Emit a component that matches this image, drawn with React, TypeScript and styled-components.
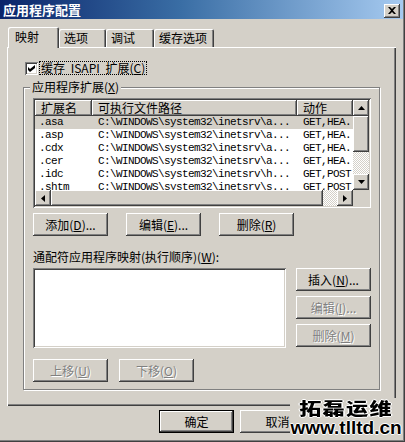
import styled, { createGlobalStyle } from 'styled-components'

const face = '#d4d0c8'

const raised = `
  box-shadow: inset -1px -1px #404040, inset 1px 1px #fff, inset -2px -2px #808080, inset 2px 2px ${face};
`
const sunken = `
  box-shadow: inset 1px 1px #808080, inset -1px -1px #fff, inset 2px 2px #404040, inset -2px -2px ${face};
`

const GlobalStyle = createGlobalStyle`
  html, body {
    margin: 0;
    padding: 0;
    background: ${face};
  }
  body {
    font-family: "Noto Sans CJK SC", "Liberation Sans", sans-serif;
    font-size: 12px;
    color: #000;
  }
  * {
    box-sizing: border-box;
  }
`

const Window = styled.div`
  position: relative;
  width: 405px;
  height: 442px;
  padding-right: 2px;
  background: ${face};
  box-shadow: inset -1px -1px #404040, inset -2px -2px #808080;
  overflow: hidden;
`

const TitleBar = styled.div`
  height: 19px;
  display: flex;
  align-items: center;
  justify-content: space-between;
  padding: 0 3px 0 3px;
  background: linear-gradient(90deg, #0a246a 0%, #3a6ea5 45%, #a6caf0 100%);
`

const Title = styled.span`
  color: #fff;
  font-weight: bold;
  font-size: 13px;
  line-height: 19px;
`

const CloseButton = styled.div`
  width: 16px;
  height: 14px;
  margin-top: 2px;
  display: flex;
  align-items: center;
  justify-content: center;
  background: ${face};
  ${raised}
`

const Body = styled.div`
  padding: 8px 0 0 7px;
`

const TabStrip = styled.div`
  position: relative;
  z-index: 1;
  display: flex;
  align-items: flex-end;
  height: 20px;
  margin-left: 1px;
`

const Tab = styled.div<{ $w: number; $active?: boolean }>`
  width: ${(p) => p.$w}px;
  height: ${(p) => (p.$active ? 21 : 18)}px;
  margin-bottom: ${(p) => (p.$active ? -1 : 0)}px;
  padding-left: ${(p) => (p.$active ? 7 : 5)}px;
  line-height: ${(p) => (p.$active ? 20 : 18)}px;
  background: ${face};
  border-radius: 2px 2px 0 0;
  box-shadow: inset 1px 1px #fff, inset -1px 0 #404040, inset -2px 0 #808080;
`

const Panel = styled.div`
  width: 389px;
  height: 359px;
  padding-top: 14px;
  box-shadow: inset 1px 1px #fff, inset -1px -1px #404040, inset -2px -2px #808080;
`

const CheckRow = styled.div`
  display: flex;
  align-items: center;
  gap: 1px;
  height: 14px;
  margin-left: 18px;
`

const CheckBox = styled.div`
  width: 13px;
  height: 13px;
  display: flex;
  align-items: center;
  justify-content: center;
  background: #fff;
  ${sunken}
`

const FocusLabel = styled.span`
  padding: 0 1px;
  border: 1px dotted #000;
  line-height: 12px;
  word-spacing: 3px;
`

const Group = styled.fieldset`
  width: 357px;
  margin: 5px 0 0 16px;
  padding: 4px 8px 7px 9px;
  border: 1px solid #808080;
  box-shadow: inset 1px 1px #fff, 1px 1px #fff;
  min-inline-size: auto;
`

const Legend = styled.legend`
  margin-left: -3px;
  padding: 0 2px;
  line-height: 14px;
  background: ${face};
`

const ListView = styled.div`
  width: 338px;
  height: 110px;
  padding: 2px;
  display: grid;
  grid-template-columns: 1fr 16px;
  grid-template-rows: 1fr 16px;
  background: #fff;
  ${sunken}
`

const TableArea = styled.div`
  overflow: hidden;
`

const cols = '57px 205px 56px'

const HeaderRow = styled.div`
  display: grid;
  grid-template-columns: ${cols};
  height: 16px;
`

const HeaderCell = styled.div`
  padding-left: 6px;
  line-height: 16px;
  background: ${face};
  white-space: nowrap;
  overflow: hidden;
  box-shadow: inset -1px -1px #404040, inset 1px 1px #fff, inset -2px -2px #808080;
`

const Row = styled.div<{ $selected?: boolean }>`
  display: grid;
  grid-template-columns: ${cols};
  height: 13px;
  background: ${(p) => (p.$selected ? face : '#fff')};
`

const Cell = styled.div<{ $pad: number }>`
  padding-left: ${(p) => p.$pad}px;
  font-family: "Liberation Mono", monospace;
  font-size: 11px;
  letter-spacing: -0.6px;
  line-height: 13px;
  white-space: nowrap;
  overflow: hidden;
`

const VScroll = styled.div`
  display: grid;
  grid-template-rows: 16px 36px 1fr 16px;
`

const HScroll = styled.div`
  display: grid;
  grid-template-columns: 16px 272px 1fr 16px;
`

const ScrollButton = styled.div`
  display: flex;
  align-items: center;
  justify-content: center;
  background: ${face};
  ${raised}
`

const Track = styled.div`
  background: repeating-conic-gradient(${face} 0 25%, #fff 0 50%) 0 0 / 2px 2px;
`

const Corner = styled.div`
  background: ${face};
`

const ButtonRow = styled.div<{ $gap: number; $top: number }>`
  display: flex;
  gap: ${(p) => p.$gap}px;
  margin-top: ${(p) => p.$top}px;
`

const Button = styled.div<{ $disabled?: boolean; $default?: boolean }>`
  width: 75px;
  height: 23px;
  display: flex;
  align-items: center;
  justify-content: center;
  background: ${face};
  line-height: 14px;
  white-space: nowrap;
  color: ${(p) => (p.$disabled ? '#808080' : '#000')};
  text-shadow: ${(p) => (p.$disabled ? '1px 1px #fff' : 'none')};
  box-shadow: ${(p) =>
    p.$default
      ? 'inset 0 0 0 1px #000, inset -2px -2px #404040, inset 2px 2px #fff, inset -3px -3px #808080'
      : `inset -1px -1px #404040, inset 1px 1px #fff, inset -2px -2px #808080, inset 2px 2px ${face}`};
`

const FieldLabel = styled.div`
  margin-top: 14px;
  line-height: 14px;
`

const WildRow = styled.div`
  display: flex;
  gap: 10px;
  margin-top: 4px;
`

const ListBox = styled.div`
  width: 253px;
  height: 80px;
  background: #fff;
  ${sunken}
`

const SideButtons = styled.div`
  display: flex;
  flex-direction: column;
  gap: 5px;
`

const Footer = styled.div`
  display: flex;
  gap: 6px;
  margin-top: 4px;
  padding-left: 152px;
`

const Watermark = styled.div`
  position: absolute;
  right: 3px;
  bottom: 2px;
  width: 112px;
  height: 42px;
  background: ${face};
  display: flex;
  flex-direction: column;
  align-items: center;
  color: #000;
  text-shadow: 1px 0 #fff, -1px 0 #fff, 0 1px #fff, 0 -1px #fff;
`

const MarkName = styled.div`
  font-family: "Noto Sans CJK SC", sans-serif;
  font-weight: 900;
  font-size: 17px;
  line-height: 20px;
  letter-spacing: 1px;
  transform: scaleX(1.3);
`

const MarkUrl = styled.div`
  font-family: "Liberation Sans", Arial, sans-serif;
  font-weight: bold;
  font-size: 19px;
  line-height: 20px;
`

const Key = ({ k }: { k: string }) => <u>{k}</u>

const UpArrow = () => (
  <svg width="7" height="4" viewBox="0 0 7 4">
    <path d="M3.5 0L7 4H0z" fill="#000" />
  </svg>
)
const DownArrow = () => (
  <svg width="7" height="4" viewBox="0 0 7 4">
    <path d="M0 0h7L3.5 4z" fill="#000" />
  </svg>
)
const LeftArrow = () => (
  <svg width="4" height="7" viewBox="0 0 4 7">
    <path d="M4 0v7L0 3.5z" fill="#000" />
  </svg>
)
const RightArrow = () => (
  <svg width="4" height="7" viewBox="0 0 4 7">
    <path d="M0 0l4 3.5L0 7z" fill="#000" />
  </svg>
)

const rows = [
  { ext: '.asa', path: 'C:\\WINDOWS\\system32\\inetsrv\\a...', verbs: 'GET,HEA...' },
  { ext: '.asp', path: 'C:\\WINDOWS\\system32\\inetsrv\\a...', verbs: 'GET,HEA...' },
  { ext: '.cdx', path: 'C:\\WINDOWS\\system32\\inetsrv\\a...', verbs: 'GET,HEA...' },
  { ext: '.cer', path: 'C:\\WINDOWS\\system32\\inetsrv\\a...', verbs: 'GET,HEA...' },
  { ext: '.idc', path: 'C:\\WINDOWS\\system32\\inetsrv\\h...', verbs: 'GET,POST' },
  { ext: '.shtm', path: 'C:\\WINDOWS\\system32\\inetsrv\\s...', verbs: 'GET,POST' },
  { ext: '.shtml', path: 'C:\\WINDOWS\\system32\\inetsrv\\s...', verbs: 'GET,POST' },
]

export default function App() {
  return (
    <>
      <GlobalStyle />
      <Window>
        <TitleBar>
          <Title>应用程序配置</Title>
          <CloseButton>
            <svg width="8" height="7" viewBox="0 0 8 7">
              <path d="M0 0h2l2 2 2-2h2L5 3.5 8 7H6L4 5 2 7H0l3-3.5z" fill="#000" />
            </svg>
          </CloseButton>
        </TitleBar>
        <Body>
          <TabStrip>
            <Tab $w={51} $active>映射</Tab>
            <Tab $w={47}>选项</Tab>
            <Tab $w={48}>调试</Tab>
            <Tab $w={60}>缓存选项</Tab>
          </TabStrip>
          <Panel>
            <CheckRow>
              <CheckBox>
                <svg width="7" height="7" viewBox="0 0 7 7">
                  <path d="M0 2l2 2 5-4v3L2 7 0 5z" fill="#000" />
                </svg>
              </CheckBox>
              <FocusLabel>
                缓存 ISAPI 扩展(<Key k="C" />)
              </FocusLabel>
            </CheckRow>
            <Group>
              <Legend>
                应用程序扩展(<Key k="X" />)
              </Legend>
              <ListView>
                <TableArea>
                  <HeaderRow>
                    <HeaderCell>扩展名</HeaderCell>
                    <HeaderCell>可执行文件路径</HeaderCell>
                    <HeaderCell>动作</HeaderCell>
                  </HeaderRow>
                  {rows.map((r, i) => (
                    <Row key={r.ext} $selected={i === 0}>
                      <Cell $pad={4}>{r.ext}</Cell>
                      <Cell $pad={6}>{r.path}</Cell>
                      <Cell $pad={6}>{r.verbs}</Cell>
                    </Row>
                  ))}
                </TableArea>
                <VScroll>
                  <ScrollButton>
                    <UpArrow />
                  </ScrollButton>
                  <ScrollButton />
                  <Track />
                  <ScrollButton>
                    <DownArrow />
                  </ScrollButton>
                </VScroll>
                <HScroll>
                  <ScrollButton>
                    <LeftArrow />
                  </ScrollButton>
                  <ScrollButton />
                  <Track />
                  <ScrollButton>
                    <RightArrow />
                  </ScrollButton>
                </HScroll>
                <Corner />
              </ListView>
              <ButtonRow $gap={18} $top={5}>
                <Button>
                  添加(<Key k="D" />)...
                </Button>
                <Button>
                  编辑(<Key k="E" />)...
                </Button>
                <Button>
                  删除(<Key k="R" />)
                </Button>
              </ButtonRow>
              <FieldLabel>
                通配符应用程序映射(执行顺序)(<Key k="W" />):
              </FieldLabel>
              <WildRow>
                <ListBox />
                <SideButtons>
                  <Button>
                    插入(<Key k="N" />)...
                  </Button>
                  <Button $disabled>
                    编辑(<Key k="I" />)...
                  </Button>
                  <Button $disabled>
                    删除(<Key k="M" />)
                  </Button>
                </SideButtons>
              </WildRow>
              <ButtonRow $gap={11} $top={11}>
                <Button $disabled>
                  上移(<Key k="U" />)
                </Button>
                <Button $disabled>
                  下移(<Key k="O" />)
                </Button>
              </ButtonRow>
            </Group>
          </Panel>
          <Footer>
            <Button $default>确定</Button>
            <Button>取消</Button>
          </Footer>
        </Body>
        <Watermark>
          <MarkName>拓磊运维</MarkName>
          <MarkUrl>www.tlltd.cn</MarkUrl>
        </Watermark>
      </Window>
    </>
  )
}
